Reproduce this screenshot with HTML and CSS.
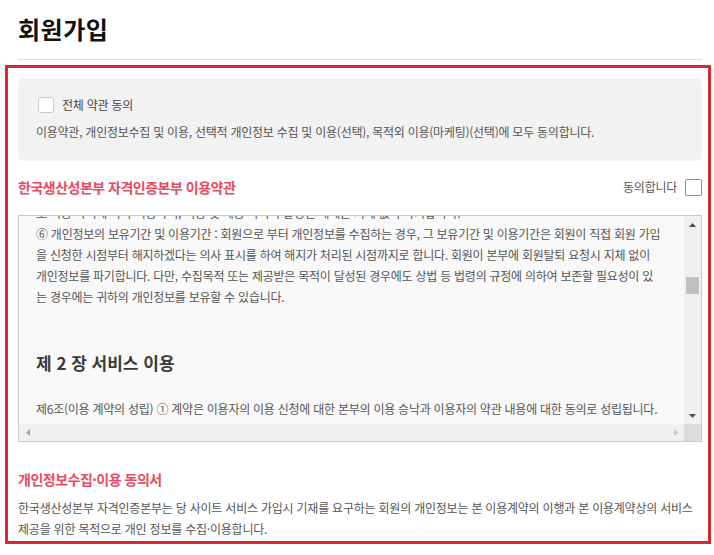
FILE: index.html
```html
<!DOCTYPE html>
<html lang="ko">
<head>
<meta charset="utf-8">
<title>회원가입</title>
<link rel="stylesheet" href="styles.css">
</head>
<body>
<div class="page">
  <header class="head">
    <h1 class="title">회원가입</h1>
  </header>
  <section class="frame">
    <div class="allbox">
      <label class="allrow"><span class="chk"></span><span class="alllabel">전체 약관 동의</span></label>
      <p class="alldesc">이용약관, 개인정보수집 및 이용, 선택적 개인정보 수집 및 이용(선택), 목적외 이용(마케팅)(선택)에 모두 동의합니다.</p>
    </div>
    <div class="sechead">
      <h2 class="sectitle">한국생산성본부 자격인증본부 이용약관</h2>
      <label class="agree"><span class="agreetext">동의합니다</span><span class="chk2"></span></label>
    </div>
    <div class="scrollbox">
      <div class="viewport">
        <div class="doc">
          <div class="line">보 이용 목적에 따라 이용하며, 이용 및 제공 목적이 달성된 때에는 지체 없이 파기합니다.</div>
          <div class="line">⑥ 개인정보의 보유기간 및 이용기간 : 회원으로 부터 개인정보를 수집하는 경우, 그 보유기간 및 이용기간은 회원이 직접 회원 가입</div>
          <div class="line">을 신청한 시점부터 해지하겠다는 의사 표시를 하여 해지가 처리된 시점까지로 합니다. 회원이 본부에 회원탈퇴 요청시 지체 없이</div>
          <div class="line">개인정보를 파기합니다. 다만, 수집목적 또는 제공받은 목적이 달성된 경우에도 상법 등 법령의 규정에 의하여 보존할 필요성이 있</div>
          <div class="line">는 경우에는 귀하의 개인정보를 보유할 수 있습니다.</div>
          <h3 class="chapter">제 2 장 서비스 이용</h3>
          <div class="line">제6조(이용 계약의 성립) ① 계약은 이용자의 이용 신청에 대한 본부의 이용 승낙과 이용자의 약관 내용에 대한 동의로 성립됩니다.</div>
        </div>
      </div>
      <div class="vbar">
        <div class="sbtn"><svg width="7" height="4" viewBox="0 0 7 4"><polygon points="0,4 7,4 3.5,0" fill="#505050"/></svg></div>
        <div class="vtrack"><div class="vthumb"></div></div>
        <div class="sbtn"><svg width="7" height="4" viewBox="0 0 7 4"><polygon points="0,0 7,0 3.5,4" fill="#505050"/></svg></div>
      </div>
      <div class="hbar">
        <div class="sbtn"><svg width="4" height="7" viewBox="0 0 4 7"><polygon points="4,0 4,7 0,3.5" fill="#a3a3a3"/></svg></div>
        <div class="htrack"></div>
        <div class="sbtn"><svg width="4" height="7" viewBox="0 0 4 7"><polygon points="0,0 0,7 4,3.5" fill="#c4c4c4"/></svg></div>
      </div>
      <div class="corner"></div>
    </div>
    <h2 class="sectitle s2">개인정보수집·이용 동의서</h2>
    <p class="body">한국생산성본부 자격인증본부는 당 사이트 서비스 가입시 기재를 요구하는 회원의 개인정보는 본 이용계약의 이행과 본 이용계약상의 서비스 제공을 위한 목적으로 개인 정보를 수집·이용합니다.</p>
  </section>
</div>
</body>
</html>
```

FILE: styles.css
```css
* { box-sizing: border-box; }
html, body { margin: 0; padding: 0; background: #fff; }
body {
  font-family: "Noto Sans CJK KR", "Noto Sans", sans-serif;
  font-size: 12px;
  color: #555;
  letter-spacing: -0.25px;
  word-break: keep-all;
}
.page { width: 714px; }

.head {
  margin: 0 12px 0 18px;
  padding: 13px 0 14px;
  border-bottom: 1px solid #dedede;
}
.title {
  margin: 0;
  font-size: 24px;
  line-height: 32px;
  font-weight: 700;
  color: #111;
  letter-spacing: 0.5px;
}

.frame {
  margin: 5px 3px 0 5px;
  border: 3px solid #dc2631;
  padding: 10px 6px 2px 10px;
}

.allbox {
  background: #f2f2f2;
  border-radius: 5px;
  padding: 19px 18px 19px 18px;
}
.allrow {
  display: flex;
  align-items: center;
  height: 16px;
  gap: 8px;
}
.chk {
  width: 16px;
  height: 16px;
  margin-left: 2px;
  background: #fff;
  border: 1px solid #c9c9c9;
  border-radius: 3px;
}
.alllabel { color: #444; line-height: 16px; }
.alldesc {
  margin: 9px 0 0;
  line-height: 20px;
  color: #555;
}

.sechead {
  margin-top: 18px;
  height: 16px;
  display: flex;
  align-items: center;
  justify-content: space-between;
}
.sectitle {
  margin: 0;
  font-size: 14px;
  line-height: 16px;
  font-weight: 700;
  color: #e84a5f;
  letter-spacing: -0.5px;
}
.agree {
  display: flex;
  align-items: center;
  gap: 8px;
}
.agreetext { color: #555; line-height: 16px; }
.chk2 {
  width: 17px;
  height: 17px;
  background: #fff;
  border: 1px solid #8d8d8d;
  border-radius: 2px;
}

.scrollbox {
  margin-top: 20px;
  border: 1px solid #c9c9c9;
  display: grid;
  grid-template-columns: 1fr 17px;
  grid-template-rows: 208px 17px;
  background: #f9f9f9;
}
.viewport {
  overflow: hidden;
}
.doc {
  margin-top: -14px;
  padding-left: 17px;
}
.line {
  white-space: nowrap;
  line-height: 21px;
  color: #555;
}
.chapter {
  margin: 42px 0 22px;
  font-size: 17px;
  line-height: 27px;
  font-weight: 700;
  color: #3a3a3a;
  letter-spacing: 0;
}

.vbar {
  background: #f0f0f0;
  display: flex;
  flex-direction: column;
}
.sbtn {
  width: 17px;
  height: 17px;
  flex: none;
  display: flex;
  align-items: center;
  justify-content: center;
}
.vtrack { flex: 1; }
.vthumb {
  margin: 44px 0 0 2px;
  width: 13px;
  height: 17px;
  background: #c1c1c1;
}
.hbar {
  background: #f0f0f0;
  display: flex;
}
.htrack { flex: 1; }
.corner { background: #dcdcdc; }

.s2 { margin-top: 27px; line-height: 20px; }
.body {
  margin: 8px 0 0;
  line-height: 21px;
  color: #555;
  letter-spacing: -0.22px;
}
```
